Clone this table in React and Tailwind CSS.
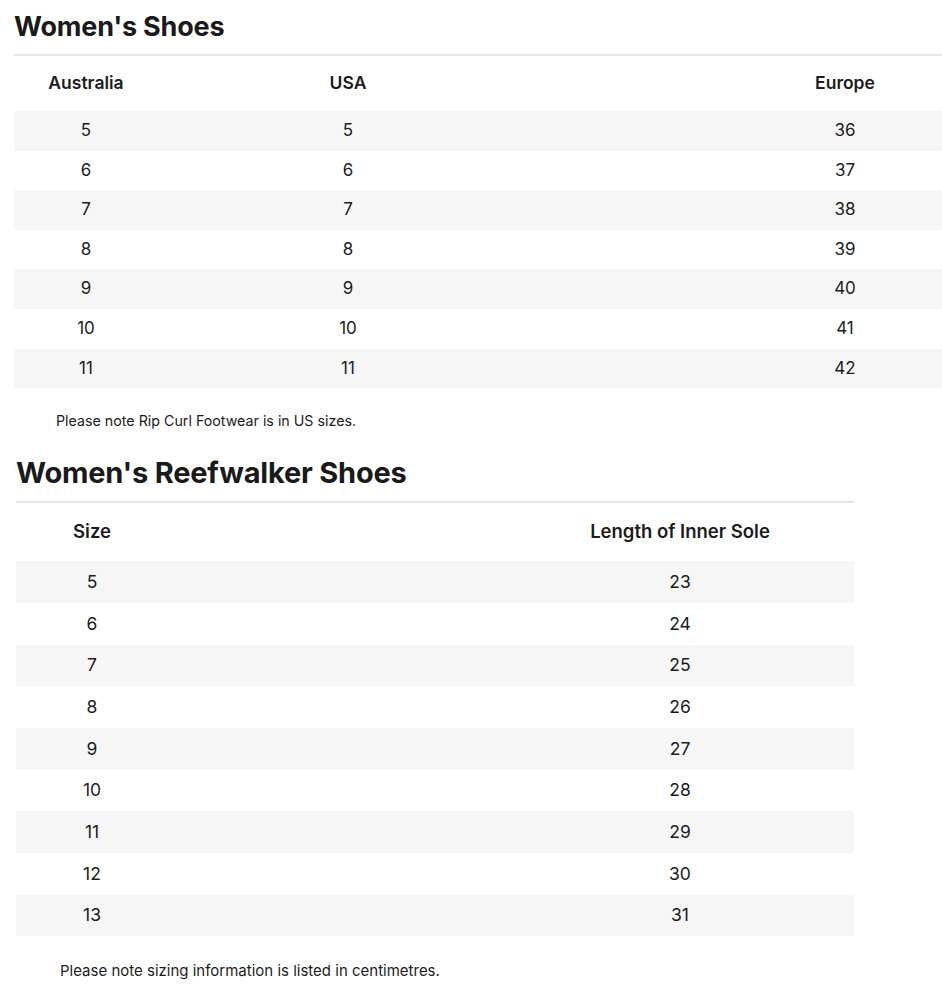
const womens = [
  ["5", "5", "36"],
  ["6", "6", "37"],
  ["7", "7", "38"],
  ["8", "8", "39"],
  ["9", "9", "40"],
  ["10", "10", "41"],
  ["11", "11", "42"],
];

const reef = [
  ["5", "23"],
  ["6", "24"],
  ["7", "25"],
  ["8", "26"],
  ["9", "27"],
  ["10", "28"],
  ["11", "29"],
  ["12", "30"],
  ["13", "31"],
];

export default function App() {
  return (
    <div className="min-h-screen bg-white text-[#1c1c1c] font-['Inter',sans-serif] overflow-hidden">
      {/* Women's Shoes */}
      <h1 className="h-[54px] pl-[14px] pt-[9px] text-[27px] leading-[36px] font-bold tracking-[-0.2px] text-[#1a1a1a]">
        Women's Shoes
      </h1>
      <div className="ml-[14px] border-t-2 border-[#e6e6e6]">
        <div className="grid grid-cols-[144px_380px_1fr] h-[55px] items-center text-[17.5px] font-semibold">
          <div className="text-center">Australia</div>
          <div className="text-center">USA</div>
          <div className="text-center pl-[210px]">Europe</div>
        </div>
        {womens.map((row, i) => (
          <div
            key={i}
            className={
              "grid grid-cols-[144px_380px_1fr] h-[39.6px] items-center text-[17px] " +
              (i % 2 === 0 ? "bg-[#f6f6f6]" : "bg-white")
            }
          >
            <div className="text-center">{row[0]}</div>
            <div className="text-center">{row[1]}</div>
            <div className="text-center pl-[210px]">{row[2]}</div>
          </div>
        ))}
      </div>
      <p className="mt-[23px] pl-[56px] text-[14.25px] leading-[20px]">
        Please note Rip Curl Footwear is in US sizes.
      </p>

      {/* Women's Reefwalker Shoes */}
      <h2 className="mt-[24px] pl-[16px] pb-[10px] text-[29px] leading-[36px] font-bold tracking-[-0.2px] text-[#1a1a1a]">
        Women's Reefwalker Shoes
      </h2>
      <div className="ml-[16px] w-[838px] border-t-2 border-[#e6e6e6]">
        <div className="grid grid-cols-[152px_1fr] h-[58px] items-center text-[18.5px] font-semibold">
          <div className="text-center">Size</div>
          <div className="text-center pl-[338px]">Length of Inner Sole</div>
        </div>
        {reef.map((row, i) => (
          <div
            key={i}
            className={
              "grid grid-cols-[152px_1fr] h-[41.7px] items-center text-[17.5px] " +
              (i % 2 === 0 ? "bg-[#f6f6f6]" : "bg-white")
            }
          >
            <div className="text-center">{row[0]}</div>
            <div className="text-center pl-[338px]">{row[1]}</div>
          </div>
        ))}
      </div>
      <p className="mt-[25px] pl-[60px] text-[15px] leading-[20px]">
        Please note sizing information is listed in centimetres.
      </p>
    </div>
  );
}
